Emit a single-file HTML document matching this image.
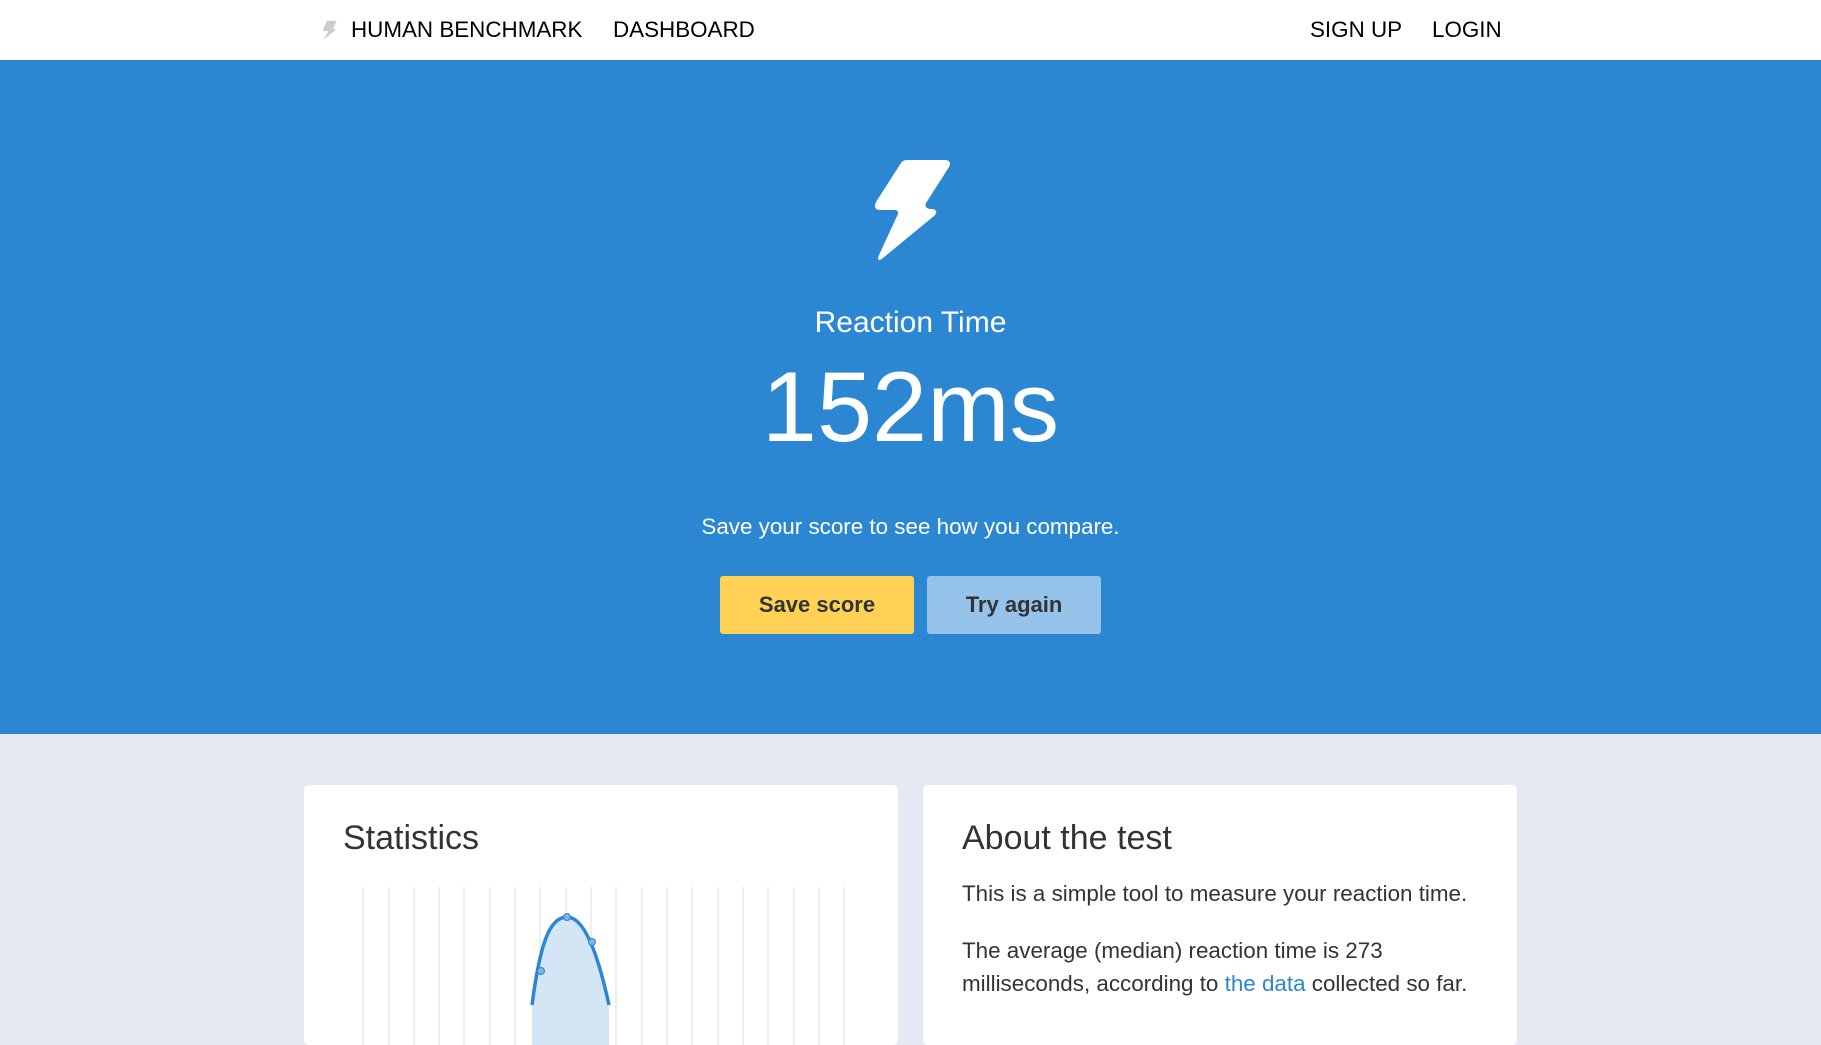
<!DOCTYPE html>
<html><head><meta charset="utf-8"><style>
*{margin:0;padding:0;box-sizing:border-box}
body{width:1821px;height:990px;overflow:hidden;font-family:"Liberation Sans",Arial,sans-serif;background:#e6e8f4;position:relative}
.hdr{position:absolute;left:0;top:0;width:1821px;height:60px;background:#fff}
.nav{position:absolute;top:17px;font-size:22.4px;color:#000}
.hero{position:absolute;left:0;top:60px;width:1821px;height:674px;background:#2b87d1;color:#fff;text-align:center}
.btn{position:absolute;top:516px;height:58px;line-height:58px;font-size:22px;font-weight:bold;color:#333;text-align:center;border-radius:3px}
.card{position:absolute;top:785px;width:594px;height:260px;background:#fff;border-radius:5px}
.card h2{position:absolute;left:39px;top:34px;font-size:34px;font-weight:normal;color:#333}
.card p{font-size:22.4px;color:#333;line-height:33px}
a{color:#2b87d1;text-decoration:none}
</style></head><body>
<div class="hdr">
<svg style="position:absolute;left:321px;top:20px" width="16" height="20" viewBox="0 0 80 100"><path d="M30 4 L78 4 L60 44 L76 46 L14 98 L36 56 L8 54 Z" fill="#ccc"/></svg>
<div class="nav" style="left:351px">HUMAN BENCHMARK</div>
<div class="nav" style="left:613px">DASHBOARD</div>
<div class="nav" style="left:1310px">SIGN UP</div>
<div class="nav" style="left:1432px">LOGIN</div>
</div>
<div class="hero">
<svg style="position:absolute;left:871px;top:99px" width="80" height="104" viewBox="0 0 80 104"><path d="M30 4 Q32 1 36 1 L75 1 Q81 2 78 8 L55 44 Q53 49 59 50 L62 50 Q68 52 63 57 L12 99 Q5 104 8 96 L27 55 Q28 51 23 51 L8 51 Q2 50 5 43 Z" fill="#fff"/></svg>
<div style="position:absolute;left:0;width:100%;top:246px;font-size:30px">Reaction Time</div>
<div style="position:absolute;left:0;width:100%;top:287px;font-size:99px;line-height:120px">152ms</div>
<div style="position:absolute;left:0;width:100%;top:454px;font-size:22.4px">Save your score to see how you compare.</div>
<div class="btn" style="left:720px;width:194px;background:#ffd154">Save score</div>
<div class="btn" style="left:927px;width:174px;background:#95c3ea">Try again</div>
</div>
<div class="card" style="left:304px"><h2>Statistics</h2>
<svg style="position:absolute;left:0;top:0" width="594" height="260">
<g stroke="#e8e8e8" stroke-width="1.5">
<line x1="59" y1="102" x2="59" y2="260"/><line x1="85" y1="102" x2="85" y2="260"/><line x1="110" y1="102" x2="110" y2="260"/><line x1="135" y1="102" x2="135" y2="260"/><line x1="160" y1="102" x2="160" y2="260"/><line x1="186" y1="102" x2="186" y2="260"/><line x1="211" y1="102" x2="211" y2="260"/><line x1="236" y1="102" x2="236" y2="260"/><line x1="262" y1="102" x2="262" y2="260"/><line x1="287" y1="102" x2="287" y2="260"/><line x1="312" y1="102" x2="312" y2="260"/><line x1="338" y1="102" x2="338" y2="260"/><line x1="363" y1="102" x2="363" y2="260"/><line x1="388" y1="102" x2="388" y2="260"/><line x1="414" y1="102" x2="414" y2="260"/><line x1="439" y1="102" x2="439" y2="260"/><line x1="464" y1="102" x2="464" y2="260"/><line x1="490" y1="102" x2="490" y2="260"/><line x1="515" y1="102" x2="515" y2="260"/><line x1="540" y1="102" x2="540" y2="260"/>
</g>
<path d="M228 220 C236 160 245 132 263 132 C278 132 292 160 305 220 L305 260 L228 260 Z" fill="#d4e5f6"/>
<path d="M228 220 C236 160 245 132 263 132 C278 132 292 160 305 220" fill="none" stroke="#2b87d1" stroke-width="3.5"/>
<circle cx="263" cy="132" r="3.5" fill="#7fb3e2" stroke="#2b87d1"/><circle cx="288" cy="157" r="3.5" fill="#7fb3e2" stroke="#2b87d1"/><circle cx="237" cy="186" r="3.5" fill="#7fb3e2" stroke="#2b87d1"/>
</svg></div>
<div class="card" style="left:923px"><h2>About the test</h2>
<p style="position:absolute;left:39px;top:92px">This is a simple tool to measure your reaction time.</p>
<p style="position:absolute;left:39px;top:149px;width:520px">The average (median) reaction time is 273 milliseconds, according to <a>the data</a> collected so far.</p>
</div>
</body></html>
